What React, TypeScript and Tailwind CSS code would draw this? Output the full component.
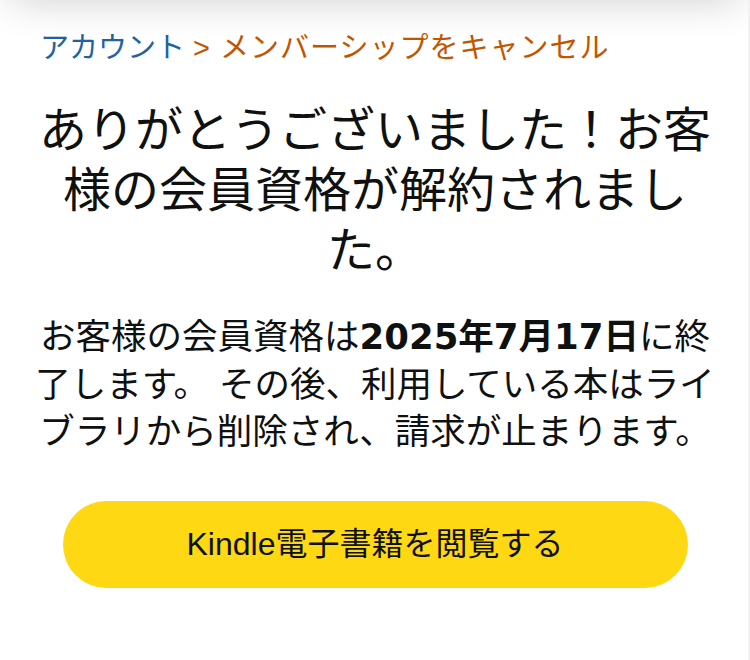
import React from "react";

export default function App() {
  const font = { fontFamily: '"Liberation Sans", "Noto Sans CJK JP", sans-serif' };
  const boldFont = { fontFamily: '"DejaVu Sans", "Noto Sans CJK JP", sans-serif' };
  return (
    <div className="relative w-[750px] h-[660px] bg-white overflow-hidden" style={font}>
      <div className="absolute -top-[40px] left-[10px] right-[10px] h-[40px] bg-white shadow-[0_0_40px_rgba(0,0,0,0.2)]" />
      <div className="absolute top-0 right-0 w-[2px] h-full bg-[#f2f2f2]" />
      <div className="flex flex-col items-center px-[36px] pt-[28px]">
        <div className="self-start pl-[4px] text-[29px] leading-[40px] text-[#2162a1] whitespace-nowrap">
          アカウント <span className="text-[#c45500] tracking-[1px]">&gt; メンバーシップをキャンセル</span>
        </div>
        <h1 className="mt-[33px] flex flex-col items-center text-[48px] leading-[60px] font-normal text-[#0f1111]">
          <span className="whitespace-nowrap">ありがとうございました！お客</span>
          <span className="whitespace-nowrap">様の会員資格が解約されまし</span>
          <span className="whitespace-nowrap">た。</span>
        </h1>
        <p className="mt-[32px] flex flex-col items-center text-[35.5px] leading-[47.5px] text-[#0f1111]">
          <span className="whitespace-nowrap">
            お客様の会員資格は<span className="font-bold" style={boldFont}>2025年7月17日</span>に終
          </span>
          <span className="whitespace-nowrap">了します。 その後、利用している本はライ</span>
          <span className="whitespace-nowrap">ブラリから削除され、請求が止まります。</span>
        </p>
        <button className="mt-[44px] w-[625px] h-[87px] rounded-full bg-[#ffd814] text-[32px] text-[#0f1111] flex items-center justify-center">
          Kindle電子書籍を閲覧する
        </button>
      </div>
    </div>
  );
}
